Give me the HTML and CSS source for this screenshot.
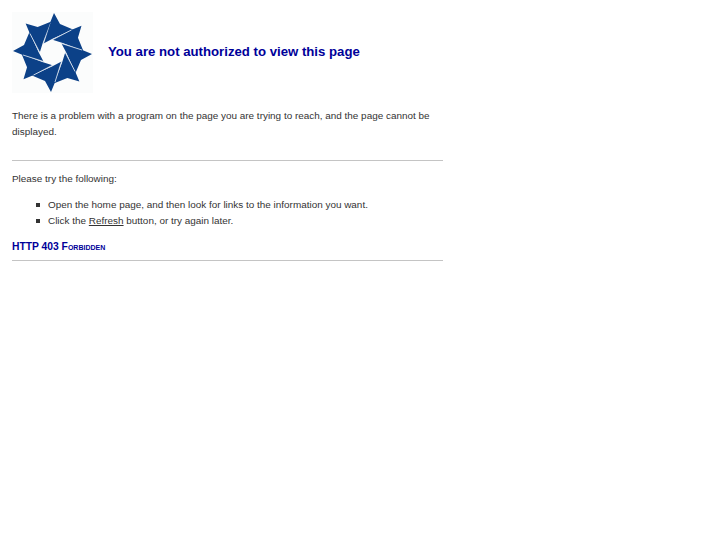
FILE: index.html
```html
<!DOCTYPE html>
<html lang="en">
<head>
<meta charset="utf-8">
<title>You are not authorized to view this page</title>
<link rel="stylesheet" href="styles.css">
</head>
<body>
<div class="page">
  <header class="head">
    <svg class="logo" width="81" height="81" viewBox="12 12 81 81" aria-hidden="true">
      <defs>
        <g id="blade">
          <polygon class="blade-fill" points="54,13 60,24 73,29.5 53,38.5 43.5,43.5 49.5,24"/>
          <line class="blade-edge" x1="50" y1="23" x2="43.5" y2="43.5"/>
        </g>
      </defs>
      <rect class="logo-bg" x="12" y="12" width="81" height="81"/>
      <use href="#blade"/>
      <use href="#blade" transform="rotate(45 52.5 52.5)"/>
      <use href="#blade" transform="rotate(90 52.5 52.5)"/>
      <use href="#blade" transform="rotate(135 52.5 52.5)"/>
      <use href="#blade" transform="rotate(180 52.5 52.5)"/>
      <use href="#blade" transform="rotate(225 52.5 52.5)"/>
      <use href="#blade" transform="rotate(270 52.5 52.5)"/>
      <use href="#blade" transform="rotate(315 52.5 52.5)"/>
    </svg>
    <h1 class="title">You are not authorized to view this page</h1>
  </header>
  <p class="intro">There is a problem with a program on the page you are trying to reach, and the page cannot be displayed.</p>
  <hr class="rule">
  <p class="try">Please try the following:</p>
  <ul class="steps">
    <li>Open the home page, and then look for links to the information you want.</li>
    <li>Click the <span class="key">Refresh</span> button, or try again later.</li>
  </ul>
  <h2 class="code">HTTP 403 Forbidden</h2>
  <hr class="rule rule-end">
</div>
</body>
</html>
```
FILE: styles.css
```css
html, body {
  margin: 0;
  padding: 0;
  background: #fff;
}
body {
  font-family: "Liberation Sans", Arial, sans-serif;
  font-size: 9.93px;
  line-height: 16px;
  color: #333;
}
.page {
  width: 431px;
  padding: 12px 0 0 12px;
}
.head {
  display: flex;
  align-items: center;
  gap: 15px;
}
.logo {
  display: block;
  flex: none;
}
.logo-bg {
  fill: #fbfcfc;
}
.blade-fill {
  fill: #0c4188;
}
.blade-edge {
  stroke: #e6ecf4;
  stroke-width: 0.8;
}
.title {
  margin: -2px 0 0;
  font-size: 13.2px;
  font-weight: bold;
  color: #000099;
  white-space: nowrap;
}
.intro {
  margin: 15px 0 0;
}
.rule {
  height: 1px;
  margin: 20px 0 0;
  border: 0;
  background: #c4c4c4;
}
.try {
  margin: 10px 0 0;
}
.steps {
  margin: 10px 0 0;
  padding: 0 0 0 36px;
  list-style: none;
}
.steps li::before {
  content: "";
  display: inline-block;
  width: 4px;
  height: 4px;
  margin: 0 8px 1px -12px;
  background: #333;
}
.key {
  text-decoration: underline;
}
.code {
  margin: 10px 0 0;
  font-size: 10.3px;
  font-weight: bold;
  font-variant: small-caps;
  color: #000099;
}
.rule-end {
  margin-top: 5px;
}
```
